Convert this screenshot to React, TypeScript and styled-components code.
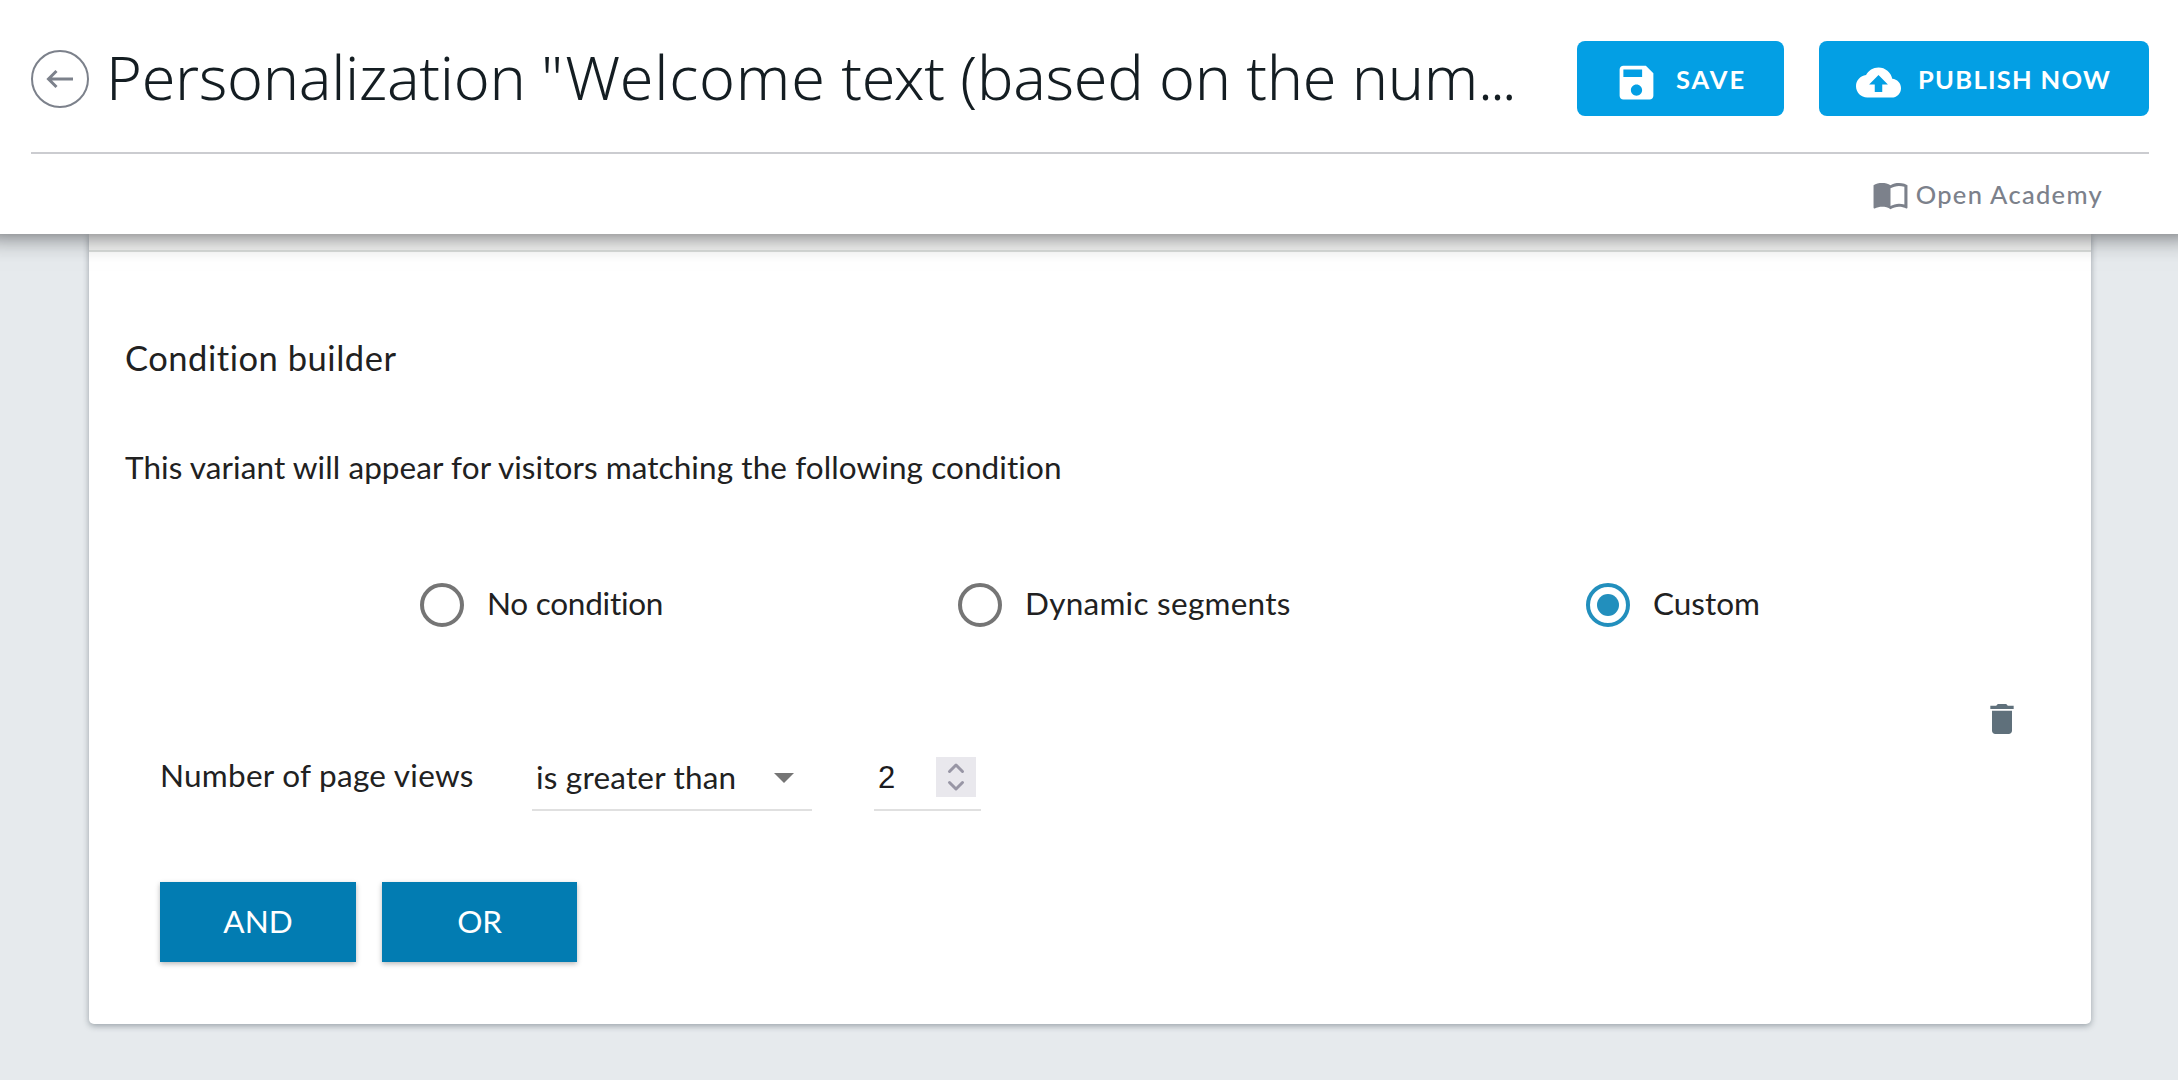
import React from "react";
import styled, { createGlobalStyle } from "styled-components";

const GlobalStyle = createGlobalStyle`
  *, *::before, *::after { box-sizing: border-box; }
  body {
    margin: 0;
    background: #e6eaed;
    font-family: Lato, "Noto Sans", sans-serif;
    font-variant-ligatures: none;
  }
  button { font-family: inherit; border: 0; cursor: pointer; }
`;

const Page = styled.div`
  height: 1080px;
  display: flex;
  flex-direction: column;
  overflow: hidden;
  color: #212121;
`;

const Header = styled.header`
  position: relative;
  z-index: 1;
  flex: none;
  height: 234px;
  padding: 0 29px 0 31px;
  background: #fff;
  box-shadow: 0 -20px 25px 20px rgba(0, 0, 6, 0.64);
`;

const TitleBar = styled.div`
  display: flex;
  align-items: center;
  height: 154px;
  padding-top: 5px;
  border-bottom: 2px solid #cbccd0;
`;

const BackButton = styled.button`
  display: flex;
  align-items: center;
  justify-content: center;
  width: 58px;
  height: 58px;
  padding: 0;
  border: 2px solid #7c818b;
  border-radius: 50%;
  background: #fff;
  color: #7c818b;
`;

const Title = styled.h1`
  flex: 1;
  margin: 0 0 4px;
  padding-left: 17px;
  font: 300 61px/80px "Noto Sans", sans-serif;
  letter-spacing: -0.3px;
  color: #141d22;
  white-space: nowrap;
`;

const Tracked = styled.span<{ $tracking: number }>`
  letter-spacing: ${(p) => p.$tracking}px;
`;

const Actions = styled.div`
  display: flex;
  gap: 35px;
`;

const ActionButton = styled.button<{ $width: number; $indent: number; $tracking: number }>`
  display: flex;
  align-items: center;
  gap: 17px;
  width: ${(p) => p.$width}px;
  height: 75px;
  padding: 0 0 0 ${(p) => p.$indent}px;
  border-radius: 8px;
  background: #039fe4;
  color: #fff;
  font-size: 25.5px;
  font-weight: 700;
  letter-spacing: ${(p) => p.$tracking}px;
  white-space: nowrap;

  svg { margin-top: 8px; }
`;

const SubBar = styled.div`
  display: flex;
  justify-content: flex-end;
  align-items: center;
  height: 80px;
  padding-right: 46px;
`;

const AcademyLink = styled.a`
  display: flex;
  align-items: center;
  gap: 7px;
  color: #7c818b;
  font-size: 25.5px;
  font-weight: 500;
  letter-spacing: 1.3px;
`;

const Card = styled.main`
  width: 2002px;
  height: 790px;
  margin-left: 89px;
  border-radius: 0 0 5px 5px;
  background: #fff;
  box-shadow: 0 2px 6px rgba(40, 55, 65, 0.4);
`;

const CardHead = styled.div`
  height: 18px;
  background: #f5f6f5;
  border-bottom: 2px solid #dcdfdd;
`;

const CardBody = styled.div`
  display: flex;
  flex-direction: column;
  padding: 84px 36px 62px;
`;

const Heading = styled.h2`
  margin: 0 0 67px;
  font-size: 34.5px;
  line-height: 44px;
  font-weight: 400;
  letter-spacing: 0.53px;
`;

const Text = styled.span<{ $tracking?: number }>`
  font-size: 31.5px;
  line-height: 40px;
  letter-spacing: ${(p) => p.$tracking ?? 0}px;
  white-space: nowrap;
`;

const RadioGroup = styled.div`
  display: grid;
  grid-template-columns: 538px 628px auto;
  margin-top: 96px;
  padding-left: 295px;
`;

const RadioLabel = styled.label`
  display: flex;
  align-items: center;
  gap: 23px;
  height: 44px;

  ${Text} { margin-bottom: 5px; }
`;

const RadioMark = styled.span<{ $checked: boolean }>`
  display: flex;
  align-items: center;
  justify-content: center;
  width: 44px;
  height: 44px;
  border: 4px solid ${(p) => (p.$checked ? "#228fbd" : "#757575")};
  border-radius: 50%;

  &::after {
    content: "";
    width: 22px;
    height: 22px;
    border-radius: 50%;
    background: ${(p) => (p.$checked ? "#228fbd" : "transparent")};
  }
`;

const DeleteButton = styled.button`
  align-self: flex-end;
  height: 40px;
  margin: 72px 33px 0 0;
  padding: 0;
  background: none;
  color: #5f707b;
`;

const Rule = styled.div`
  display: flex;
  margin-top: 11px;
  padding-left: 35px;
  height: 61px;
`;

const RuleName = styled.div`
  width: 372px;
  padding-top: 5px;
`;

const Select = styled.div`
  display: flex;
  justify-content: space-between;
  width: 280px;
  padding: 7px 18px 0 4px;
  border-bottom: 2px solid #e0e0e0;
`;

const Caret = styled.span`
  width: 20px;
  height: 10px;
  margin-top: 16px;
  background: #757575;
  clip-path: polygon(0 0, 100% 0, 50% 100%);
`;

const NumberField = styled.div`
  display: flex;
  justify-content: space-between;
  width: 107px;
  margin-left: 62px;
  padding: 7px 5px 0 4px;
  border-bottom: 2px solid #e0e0e0;
  color: #1c1b20;
`;

const NumberValue = styled.span`
  padding-top: 1px;
  font: 400 31px/40px "Liberation Sans", sans-serif;
`;

const Spinner = styled.span`
  display: flex;
  width: 40px;
  height: 40px;
  background: #e9e8ed;
  color: #9896a5;
`;

const Operators = styled.div`
  display: flex;
  gap: 26px;
  margin-top: 71px;
  padding-left: 35px;
`;

const OperatorButton = styled.button<{ $width: number; $tracking: number }>`
  width: ${(p) => p.$width}px;
  height: 80px;
  padding: 0 0 2px;
  background: #027cb2;
  color: #fff;
  font-size: 31.5px;
  letter-spacing: ${(p) => p.$tracking}px;
  box-shadow: 0 2px 5px rgba(0, 0, 0, 0.28);
`;

const options = [
  { label: "No condition", tracking: -0.25 },
  { label: "Dynamic segments", tracking: 0.27 },
  { label: "Custom", tracking: 0 },
];

function Icon({ size, d }: { size: number; d: string }) {
  return (
    <svg width={size} height={size} viewBox="0 0 24 24" fill="currentColor" aria-hidden="true">
      <path d={d} />
    </svg>
  );
}

const saveIcon =
  "M17 3H5c-1.11 0-2 .9-2 2v14c0 1.1.89 2 2 2h14c1.1 0 2-.9 2-2V7l-4-4zm-5 16c-1.66 0-3-1.34-3-3s1.34-3 3-3 3 1.34 3 3-1.34 3-3 3zm3-10H5V5h10v4z";
const cloudIcon =
  "M19.35 10.04C18.67 6.59 15.64 4 12 4 9.11 4 6.6 5.64 5.35 8.04 2.34 8.36 0 10.91 0 14c0 3.31 2.69 6 6 6h13c2.76 0 5-2.24 5-5 0-2.64-2.05-4.78-4.65-4.96zM14 13v4h-4v-4H7l5-5 5 5h-3z";
const bookIcon =
  "M21 5c-1.11-.35-2.33-.5-3.5-.5-1.95 0-4.05.4-5.5 1.5-1.45-1.1-3.55-1.5-5.5-1.5S2.45 4.9 1 6v14.65c0 .25.25.5.5.5.1 0 .15-.05.25-.05C3.1 20.45 5.05 20 6.5 20c1.95 0 4.05.4 5.5 1.5 1.35-.85 3.8-1.5 5.5-1.5 1.65 0 3.35.3 4.75 1.05.1.05.15.05.25.05.25 0 .5-.25.5-.5V6c-.6-.45-1.25-.75-2-1zm0 13.5c-1.1-.35-2.3-.5-3.5-.5-1.7 0-4.15.65-5.5 1.5V8c1.35-.85 3.8-1.5 5.5-1.5 1.2 0 2.4.15 3.5.5v11.5z";
const trashIcon = "M6 19c0 1.1.9 2 2 2h8c1.1 0 2-.9 2-2V7H6v12zM19 4h-3.5l-1-1h-5l-1 1H5v2h14V4z";

export default function App() {
  return (
    <Page>
      <GlobalStyle />
      <Header>
        <TitleBar>
          <BackButton aria-label="Back">
            <svg width="28" height="20" viewBox="0 0 28 20" fill="none" stroke="currentColor" strokeWidth="3">
              <path d="M27 10H3M10.5 2L2.5 10l8 8" />
            </svg>
          </BackButton>
          <Title>
            Personalization <Tracked $tracking={0.8}>"Welcome</Tracked> text (based on the num
            <Tracked $tracking={-3}>...</Tracked>
          </Title>
          <Actions>
            <ActionButton $width={207} $indent={37} $tracking={2}>
              <Icon size={45} d={saveIcon} />
              SAVE
            </ActionButton>
            <ActionButton $width={330} $indent={37} $tracking={1.3}>
              <Icon size={45} d={cloudIcon} />
              PUBLISH NOW
            </ActionButton>
          </Actions>
        </TitleBar>
        <SubBar>
          <AcademyLink>
            <Icon size={37} d={bookIcon} />
            Open Academy
          </AcademyLink>
        </SubBar>
      </Header>
      <Card>
        <CardHead />
        <CardBody>
          <Heading>Condition builder</Heading>
          <Text $tracking={0.08}>This variant will appear for visitors matching the following condition</Text>
          <RadioGroup>
            {options.map((o) => (
              <RadioLabel key={o.label}>
                <RadioMark $checked={o.label === "Custom"} />
                <Text $tracking={o.tracking}>{o.label}</Text>
              </RadioLabel>
            ))}
          </RadioGroup>
          <DeleteButton aria-label="Delete">
            <Icon size={40} d={trashIcon} />
          </DeleteButton>
          <Rule>
            <RuleName>
              <Text $tracking={0.27}>Number of page views</Text>
            </RuleName>
            <Select>
              <Text $tracking={0.2}>is greater than</Text>
              <Caret />
            </Select>
            <NumberField>
              <NumberValue>2</NumberValue>
              <Spinner>
                <svg
                  width="40"
                  height="40"
                  viewBox="0 0 40 40"
                  fill="none"
                  stroke="currentColor"
                  strokeWidth="3"
                  strokeLinecap="round"
                  strokeLinejoin="round"
                >
                  <path d="M13.5 14.5L20 8l6.5 6.5M13.5 25.5L20 32l6.5-6.5" />
                </svg>
              </Spinner>
            </NumberField>
          </Rule>
          <Operators>
            <OperatorButton $width={196} $tracking={0}>AND</OperatorButton>
            <OperatorButton $width={195} $tracking={-0.3}>OR</OperatorButton>
          </Operators>
        </CardBody>
      </Card>
    </Page>
  );
}
